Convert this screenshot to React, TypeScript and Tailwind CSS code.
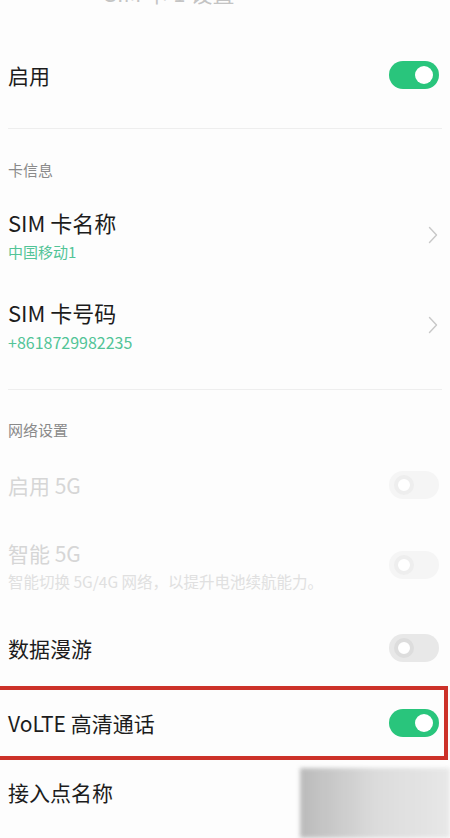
import React from 'react';

const font = { fontFamily: '"Noto Sans CJK SC", "Noto Sans", sans-serif' };

function Toggle({ on, disabled }: { on?: boolean; disabled?: boolean }) {
  if (on) {
    return (
      <div className="w-[50px] h-[28px] rounded-full bg-[#29c57c] flex items-center justify-end pr-[6px]">
        <div className="w-[18px] h-[18px] rounded-full bg-white" />
      </div>
    );
  }
  return (
    <div className={`w-[50px] h-[28px] rounded-full flex items-center pl-[5px] ${disabled ? 'bg-[#f5f5f5]' : 'bg-[#e8e8e8]'}`}>
      <div className={`w-[20px] h-[20px] rounded-full border-[4px] bg-white ${disabled ? 'border-[#eeeeee]' : 'border-[#dddddd]'}`} />
    </div>
  );
}

function Chevron() {
  return (
    <svg width="10" height="18" viewBox="0 0 10 18" fill="none">
      <path d="M1.5 1.5 L8.5 9 L1.5 16.5" stroke="#c8c8c8" strokeWidth="1.4" strokeLinecap="round" strokeLinejoin="round" />
    </svg>
  );
}

export default function App() {
  return (
    <div className="relative w-[450px] h-[838px] overflow-hidden bg-[#fdfdfd] text-[#1c1c1c]" style={font}>
      {/* title, scrolled mostly out of view */}
      <div className="h-[40px] overflow-hidden">
        <div className="pl-[104px] -mt-[22px] text-[22px] leading-[28px] text-[#c4c4c4]">SIM 卡 1 设置</div>
      </div>

      <div className="h-[70px] flex items-center justify-between pl-2 pr-[11px]">
        <span className="text-[21px] leading-[28px]">启用</span>
        <Toggle on />
      </div>

      <div className="h-[18px]" />
      <div className="mx-2 h-px bg-[#eeeeee]" />
      <div className="h-[21px]" />

      <div className="h-[40px] flex items-center pl-2 text-[15px] text-[#8a8a8a]">卡信息</div>

      <div className="h-[90px] flex items-center justify-between pl-2 pr-[12px]">
        <div className="flex flex-col gap-[6px]">
          <span className="text-[22px] leading-[28px]">SIM 卡名称</span>
          <span className="text-[15px] leading-[20px] text-[#52c497]">中国移动1</span>
        </div>
        <Chevron />
      </div>

      <div className="h-[90px] flex items-center justify-between pl-2 pr-[12px]">
        <div className="flex flex-col gap-[6px]">
          <span className="text-[22px] leading-[28px]">SIM 卡号码</span>
          <span className="text-[16px] leading-[20px] text-[#52c497]">+8618729982235</span>
        </div>
        <Chevron />
      </div>

      <div className="h-[19px]" />
      <div className="mx-2 h-px bg-[#eeeeee]" />
      <div className="h-[20px]" />

      <div className="h-[40px] flex items-center pl-2 text-[15px] text-[#8a8a8a]">网络设置</div>

      <div className="h-[70px] flex items-center justify-between pl-2 pr-[11px]">
        <span className="text-[21px] leading-[28px] text-[#d6d6d6]">启用 5G</span>
        <Toggle disabled />
      </div>

      <div className="h-[90px] flex items-center justify-between pl-2 pr-[11px]">
        <div className="flex flex-col gap-[4px]">
          <span className="text-[21px] leading-[28px] text-[#d6d6d6]">智能 5G</span>
          <span className="text-[15.5px] leading-[20px] text-[#e0e0e0]">智能切换 5G/4G 网络，以提升电池续航能力。</span>
        </div>
        <Toggle disabled />
      </div>

      <div className="h-[76px] flex items-center justify-between pl-2 pr-[11px]">
        <span className="text-[21px] leading-[28px]">数据漫游</span>
        <Toggle />
      </div>

      <div className="-ml-[4px] mr-[2px] h-[74px] border-[4px] border-[#cc3129] flex items-center justify-between pl-2 pr-[5px]">
        <span className="text-[21px] leading-[28px]">VoLTE 高清通话</span>
        <Toggle on />
      </div>

      <div className="h-[64px] flex items-center pl-2">
        <span className="text-[21px] leading-[28px]">接入点名称</span>
      </div>

      {/* blurred watermark */}
      <div className="absolute right-0 bottom-0 w-[150px] h-[70px] bg-gradient-to-r from-[#b4b4b4] via-[#d8d8d8] to-[#e6e6e6] opacity-90 blur-[2px]" />
    </div>
  );
}
